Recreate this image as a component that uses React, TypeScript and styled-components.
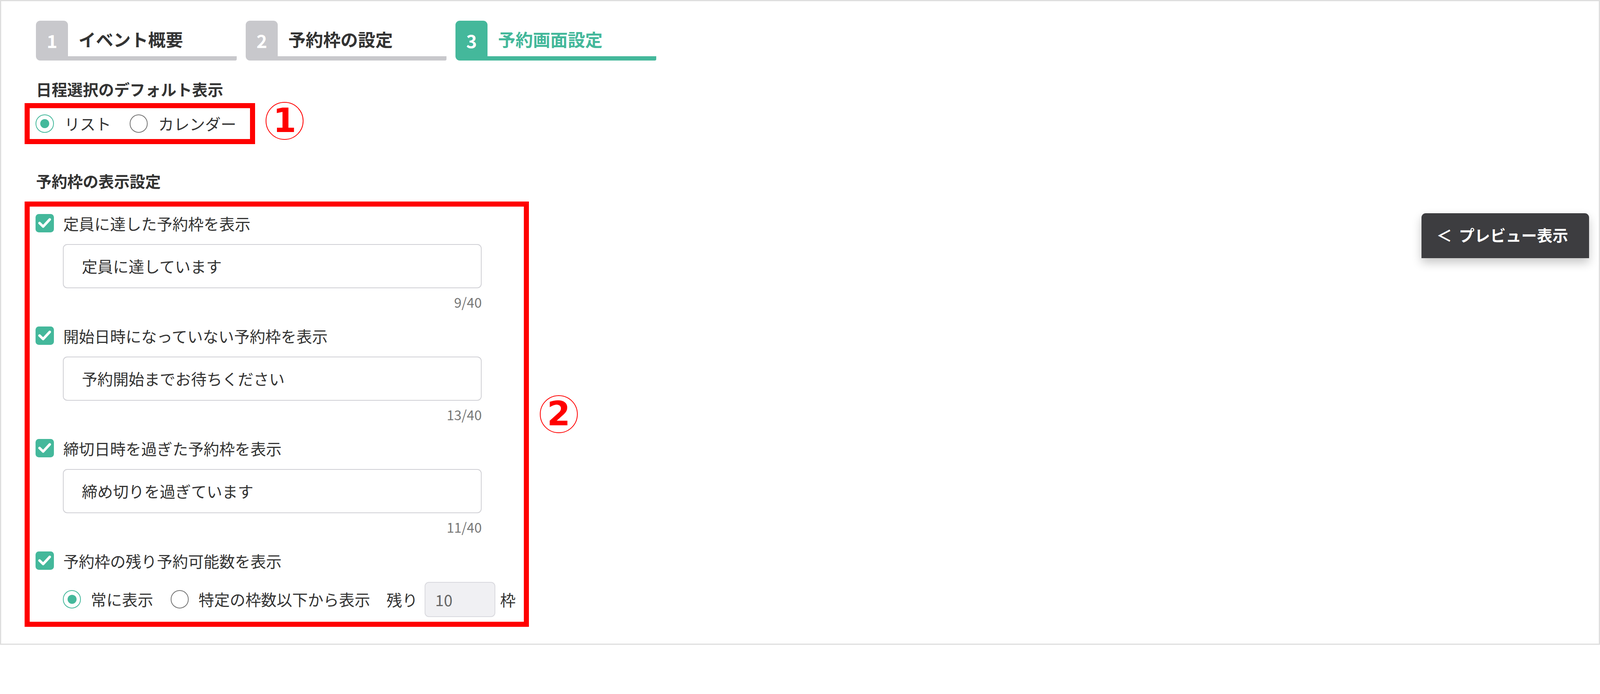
import { useEffect, useState } from "react";
import styled, { createGlobalStyle } from "styled-components";

const GREEN = "#44b89b";
const GRAY_TAB = "#c8c8cc";
const TEXT = "#333333";
const RED = "#ff0000";
const DESIGN_WIDTH = 4408;

const GlobalStyle = createGlobalStyle`
  html, body {
    margin: 0;
    padding: 0;
    background: #ffffff;
    overflow: hidden;
  }
  body {
    font-family: "Noto Sans CJK JP", "Noto Sans", sans-serif;
    color: ${TEXT};
  }
`;

type Step = { no: number; label: string; active?: boolean };

const steps: Step[] = [
  { no: 1, label: "イベント概要" },
  { no: 2, label: "予約枠の設定" },
  { no: 3, label: "予約画面設定", active: true },
];

type Slot = { label: string; value: string; count: string };

const slots: Slot[] = [
  { label: "定員に達した予約枠を表示", value: "定員に達しています", count: "9/40" },
  { label: "開始日時になっていない予約枠を表示", value: "予約開始までお待ちください", count: "13/40" },
  { label: "締切日時を過ぎた予約枠を表示", value: "締め切りを過ぎています", count: "11/40" },
];

// the page is drawn at the reference's pixel size and zoomed to fit the viewport
function useFitScale() {
  const get = () => (typeof window === "undefined" ? 1 : window.innerWidth / DESIGN_WIDTH);
  const [scale, setScale] = useState(get);
  useEffect(() => {
    const onResize = () => setScale(get());
    window.addEventListener("resize", onResize);
    return () => window.removeEventListener("resize", onResize);
  }, []);
  return scale;
}

function Checkbox() {
  return (
    <CheckBox>
      <svg width="50" height="50" viewBox="0 0 50 50">
        <polyline
          points="11,25 21,34.5 39,15"
          fill="none"
          stroke="#ffffff"
          strokeWidth="7"
          strokeLinecap="round"
          strokeLinejoin="round"
        />
      </svg>
    </CheckBox>
  );
}

export default function App() {
  const scale = useFitScale();

  return (
    <>
      <GlobalStyle />
      <Page style={{ zoom: scale }}>
        <Steps>
          {steps.map((s) => (
            <Tab key={s.no}>
              <TabNo $active={s.active}>{s.no}</TabNo>
              <TabBody $active={s.active}>{s.label}</TabBody>
            </Tab>
          ))}
        </Steps>

        <Heading $top={49}>日程選択のデフォルト表示</Heading>
        <AnnotatedRow>
          <RedBox $width={634}>
            <RadioGroup>
              <RadioOption>
                <Radio $checked />
                <span>リスト</span>
              </RadioOption>
              <RadioOption>
                <Radio />
                <span>カレンダー</span>
              </RadioOption>
            </RadioGroup>
          </RedBox>
          <Marker $lift={3}>1</Marker>
        </AnnotatedRow>

        <Heading $top={72}>予約枠の表示設定</Heading>
        <AnnotatedRow $top={26} $center>
          <RedBox $width={1389} $column>
            {slots.map((s) => (
              <SlotItem key={s.label}>
                <CheckRow>
                  <Checkbox />
                  <span>{s.label}</span>
                </CheckRow>
                <Field>
                  <TextInput readOnly value={s.value} />
                  <Counter>{s.count}</Counter>
                </Field>
              </SlotItem>
            ))}
            <SlotItem $last>
              <CheckRow>
                <Checkbox />
                <span>予約枠の残り予約可能数を表示</span>
              </CheckRow>
              <RemainRow>
                <RadioOption $tight>
                  <Radio $checked />
                  <span>常に表示</span>
                </RadioOption>
                <RadioOption $tight>
                  <Radio />
                  <span>特定の枠数以下から表示</span>
                </RadioOption>
                <RemainLabel>残り</RemainLabel>
                <SmallInput readOnly value="10" />
                <span>枠</span>
              </RemainRow>
            </SlotItem>
          </RedBox>
          <Marker>2</Marker>
        </AnnotatedRow>

        <PreviewButton type="button">
          <Chevron>＜</Chevron>プレビュー表示
        </PreviewButton>
      </Page>
    </>
  );
}

const Page = styled.div`
  position: relative;
  box-sizing: border-box;
  width: 4408px;
  height: 1777px;
  border: 4px solid #dedede;
  padding: 54px 0 0 96px;
  background: #ffffff;
  overflow: hidden;
`;

const Steps = styled.div`
  display: flex;
  gap: 25px;
`;

const Tab = styled.div`
  display: flex;
  width: 553px;
  height: 110px;
`;

const TabNo = styled.div<{ $active?: boolean }>`
  width: 88px;
  height: 110px;
  flex: none;
  display: flex;
  align-items: center;
  justify-content: center;
  padding-bottom: 4px;
  box-sizing: border-box;
  border-radius: 12px 12px 0 12px;
  background: ${(p) => (p.$active ? GREEN : GRAY_TAB)};
  color: #ffffff;
  font-size: 50px;
  font-weight: 700;
`;

const TabBody = styled.div<{ $active?: boolean }>`
  flex: 1;
  display: flex;
  align-items: center;
  padding: 4px 0 0 29px;
  border-bottom: 12px solid ${(p) => (p.$active ? GREEN : GRAY_TAB)};
  border-bottom-right-radius: 4px;
  color: ${(p) => (p.$active ? GREEN : TEXT)};
  font-size: 48px;
  font-weight: 700;
  line-height: 1;
`;

const Heading = styled.div<{ $top: number }>`
  margin-top: ${(p) => p.$top}px;
  font-size: 43px;
  line-height: 60px;
  font-weight: 700;
  color: ${TEXT};
`;

const AnnotatedRow = styled.div<{ $top?: number; $center?: boolean }>`
  display: flex;
  align-items: ${(p) => (p.$center ? "center" : "flex-start")};
  gap: 30px;
  margin-top: ${(p) => p.$top ?? 8}px;
  margin-left: -31px;
`;

const RedBox = styled.div<{ $width: number; $column?: boolean }>`
  box-sizing: border-box;
  width: ${(p) => p.$width}px;
  border: 14px solid ${RED};
  padding: ${(p) => (p.$column ? "21px 0 13px 16px" : "0 0 0 16px")};
  height: ${(p) => (p.$column ? "auto" : "113px")};
  display: flex;
  flex-direction: ${(p) => (p.$column ? "column" : "row")};
  align-items: ${(p) => (p.$column ? "stretch" : "center")};
`;

const Marker = styled.div<{ $lift?: number }>`
  box-sizing: border-box;
  width: 104px;
  height: 104px;
  margin-top: ${(p) => (p.$lift ? -p.$lift : 0)}px;
  flex: none;
  border: 3px solid ${RED};
  border-radius: 50%;
  display: flex;
  align-items: center;
  justify-content: center;
  color: ${RED};
  font-family: "DejaVu Sans", sans-serif;
  font-weight: 700;
  font-size: 92px;
  line-height: 1;
  padding-bottom: 2px;
`;

const RadioGroup = styled.div`
  display: flex;
  align-items: center;
  gap: 51px;
`;

const RadioOption = styled.label<{ $tight?: boolean }>`
  display: flex;
  align-items: center;
  gap: ${(p) => (p.$tight ? 27 : 29)}px;
  font-size: 43px;
  line-height: 50px;
  color: ${TEXT};
`;

const Radio = styled.span<{ $checked?: boolean }>`
  box-sizing: border-box;
  width: 50px;
  height: 50px;
  flex: none;
  border-radius: 50%;
  border: 3px solid ${(p) => (p.$checked ? GREEN : "#747474")};
  display: flex;
  align-items: center;
  justify-content: center;

  &::after {
    content: "";
    display: ${(p) => (p.$checked ? "block" : "none")};
    width: 25px;
    height: 25px;
    border-radius: 50%;
    background: ${GREEN};
  }
`;

const SlotItem = styled.div<{ $last?: boolean }>`
  display: flex;
  flex-direction: column;
  margin-bottom: ${(p) => (p.$last ? 0 : 48)}px;
`;

const CheckRow = styled.label`
  display: flex;
  align-items: center;
  gap: 26px;
  height: 50px;
  font-size: 43px;
  color: ${TEXT};
`;

const CheckBox = styled.span`
  width: 50px;
  height: 50px;
  flex: none;
  border-radius: 9px;
  background: ${GREEN};
  display: flex;

  svg {
    display: block;
  }
`;

const Field = styled.div`
  width: 1154px;
  margin: 32px 0 0 75px;
  display: flex;
  flex-direction: column;
`;

const TextInput = styled.input`
  box-sizing: border-box;
  width: 100%;
  height: 122px;
  border: 3px solid #cfcfd4;
  border-radius: 12px;
  padding: 0 0 0 50px;
  font-family: inherit;
  font-size: 43px;
  color: ${TEXT};
  background: #ffffff;
  outline: none;
`;

const Counter = styled.div`
  margin-top: 18px;
  text-align: right;
  font-size: 37px;
  line-height: 40px;
  color: #777777;
`;

const RemainRow = styled.div`
  display: flex;
  align-items: center;
  margin: 33px 0 0 75px;
  gap: 48px;
  font-size: 43px;
  color: ${TEXT};
`;

const RemainLabel = styled.span`
  margin-left: -3px;
  margin-right: -29px;
`;

const SmallInput = styled.input`
  box-sizing: border-box;
  width: 195px;
  height: 97px;
  margin-right: -35px;
  border: 3px solid #d9d9de;
  border-radius: 12px;
  padding: 0 0 0 27px;
  background: #f0f0f3;
  font-family: inherit;
  font-size: 43px;
  color: #666666;
  outline: none;
`;

const PreviewButton = styled.button`
  position: absolute;
  top: 584px;
  right: 27px;
  width: 462px;
  height: 124px;
  border: none;
  border-radius: 12px 12px 0 0;
  background: #3d3d40;
  box-shadow: 0 12px 26px rgba(0, 0, 0, 0.22);
  color: #ffffff;
  font-family: "Noto Sans CJK JP", sans-serif;
  font-size: 43px;
  font-weight: 700;
  padding: 0 16px 4px 0;
  cursor: pointer;
`;

const Chevron = styled.span`
  margin-right: 19px;
`;
